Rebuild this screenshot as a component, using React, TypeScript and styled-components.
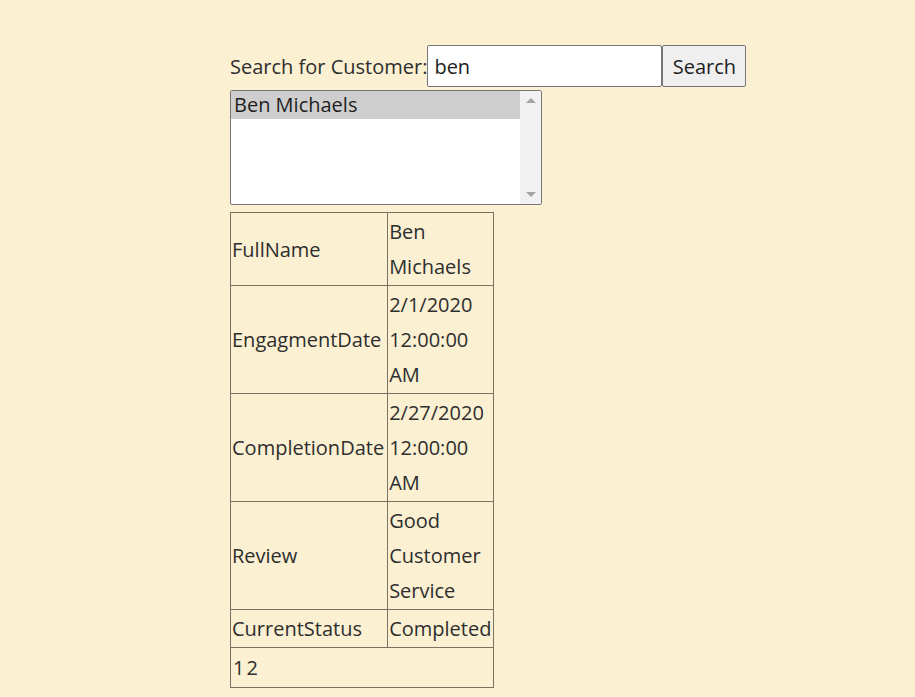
import React from "react";
import styled, { createGlobalStyle } from "styled-components";

const Global = createGlobalStyle`
  html, body { margin: 0; padding: 0; background: #fbf0d2; }
  body {
    font-family: "Open Sans", "Noto Sans", sans-serif;
    font-size: 20px;
    line-height: 35px;
    color: #2e2e2e;
  }
`;

const Page = styled.div`
  padding: 45px 0 0 230px;
  display: flex;
  flex-direction: column;
  align-items: flex-start;
  min-height: 652px;
`;

const SearchRow = styled.div`
  display: flex;
  align-items: center;
  height: 42px;
`;

const Label = styled.span`
  white-space: nowrap;
`;

const SearchInput = styled.div`
  box-sizing: border-box;
  width: 235px;
  height: 42px;
  background: #fff;
  border: 1px solid #767676;
  border-radius: 2px;
  padding: 0 6px;
  display: flex;
  align-items: center;
  color: #1e1e1e;
`;

const SearchButton = styled.div`
  box-sizing: border-box;
  width: 84px;
  height: 42px;
  background: #efefef;
  border: 1px solid #767676;
  border-radius: 2px;
  display: flex;
  align-items: center;
  justify-content: center;
  color: #1e1e1e;
`;

const ListBox = styled.div`
  box-sizing: border-box;
  margin-top: 3px;
  width: 312px;
  height: 115px;
  background: #fff;
  border: 1px solid #767676;
  border-radius: 2px;
  display: flex;
  overflow: hidden;
`;

const Options = styled.div`
  flex: 1;
  display: flex;
  flex-direction: column;
`;

const Option = styled.div<{ $selected?: boolean }>`
  height: 28px;
  line-height: 28px;
  padding-left: 3px;
  background: ${(p) => (p.$selected ? "#cecece" : "transparent")};
  color: #1e1e1e;
`;

const Scrollbar = styled.div`
  width: 21px;
  background: #f1f1f1;
  display: flex;
  flex-direction: column;
  justify-content: space-between;
  align-items: center;
  padding: 7px 0;
`;

const Arrow = styled.div<{ $down?: boolean }>`
  width: 0;
  height: 0;
  border-left: 5px solid transparent;
  border-right: 5px solid transparent;
  ${(p) =>
    p.$down
      ? "border-top: 5px solid #a3a3a3;"
      : "border-bottom: 5px solid #a3a3a3;"}
`;

const Table = styled.table`
  margin-top: 7px;
  border-collapse: collapse;
  border: 1px solid #7a7262;
  width: 1px;
`;

const Cell = styled.td<{ $padRight: number }>`
  border: 1px solid #7a7262;
  padding: 1px ${(p) => p.$padRight}px 1px 1px;
  vertical-align: middle;
  text-align: left;
`;

const PagerCell = styled.td`
  border: 1px solid #7a7262;
  padding: 1px;
`;

const PagerTable = styled.table`
  border-collapse: collapse;
`;

const PagerItem = styled.td`
  padding: 1px;
`;

const rows: [string, string][] = [
  ["FullName", "Ben Michaels"],
  ["EngagmentDate", "2/1/2020 12:00:00 AM"],
  ["CompletionDate", "2/27/2020 12:00:00 AM"],
  ["Review", "Good Customer Service"],
  ["CurrentStatus", "Completed"],
];

export default function App() {
  return (
    <>
      <Global />
      <Page>
        <SearchRow>
          <Label>Search for Customer:</Label>
          <SearchInput>ben</SearchInput>
          <SearchButton>Search</SearchButton>
        </SearchRow>
        <ListBox>
          <Options>
            <Option $selected>Ben Michaels</Option>
          </Options>
          <Scrollbar>
            <Arrow />
            <Arrow $down />
          </Scrollbar>
        </ListBox>
        <Table>
          <tbody>
            {rows.map(([k, v]) => (
              <tr key={k}>
                <Cell $padRight={3}>{k}</Cell>
                <Cell $padRight={2}>{v}</Cell>
              </tr>
            ))}
            <tr>
              <PagerCell colSpan={2}>
                <PagerTable>
                  <tbody>
                    <tr>
                      <PagerItem>1</PagerItem>
                      <PagerItem>2</PagerItem>
                    </tr>
                  </tbody>
                </PagerTable>
              </PagerCell>
            </tr>
          </tbody>
        </Table>
      </Page>
    </>
  );
}
